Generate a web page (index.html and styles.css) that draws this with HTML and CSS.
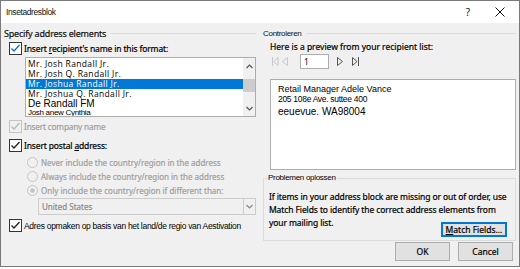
FILE: index.html
```html
<!DOCTYPE html>
<html lang="nl">
<head>
  <meta charset="UTF-8" />
  <title>Insetadresblok</title>
  <link rel="stylesheet" href="styles.css">
</head>
<body>

  <div class="dialog">
    <div class="titlebar">
      <span class="title">Insetadresblok</span>
      <span class="help">?</span>
      <svg class="close" width="10" height="10" viewBox="0 0 10 10"><path d="M0.5 0.5 L9.5 9.5 M9.5 0.5 L0.5 9.5" stroke="#111" stroke-width="1"/></svg>
    </div>

    <div class="content">
      <!-- linker kolom -->
      <div class="col left">
        <div class="group-head"><span>Specify address elements</span><i></i></div>

        <label class="check-row first">
          <svg class="box" width="13" height="13" viewBox="0 0 13 13"><rect x="0.5" y="0.5" width="12" height="12" fill="#fff" stroke="#333"/><path d="M2.5 6.5 L5 9 L10.5 3" fill="none" stroke="#0a6fd0" stroke-width="1.3"/></svg>
          <span>Insert <u>r</u>ecipient's name in this format:</span>
        </label>

        <div class="listbox">
          <div class="items">
            <div class="item">Mr. Josh Randall Jr.</div>
            <div class="item">Mr. Josh Q. Randall Jr.</div>
            <div class="item selected">Mr. Joshua Randall Jr.</div>
            <div class="item">Mr. Joshua Q. Randall Jr.</div>
            <div class="item big">De Randall FM</div>
            <div class="item small">Josh anew Cynthia</div>
          </div>
          <div class="scrollbar">
            <svg width="11" height="11" viewBox="0 0 11 11"><path d="M2.5 7 L5.5 4 L8.5 7" fill="none" stroke="#555" stroke-width="1.2"/></svg>
            <div class="thumb"></div>
            <svg class="down" width="11" height="11" viewBox="0 0 11 11"><path d="M2.5 4 L5.5 7 L8.5 4" fill="none" stroke="#555" stroke-width="1.2"/></svg>
          </div>
        </div>

        <label class="check-row disabled">
          <svg class="box" width="13" height="13" viewBox="0 0 13 13"><rect x="0.5" y="0.5" width="12" height="12" fill="#f0f0f0" stroke="#c4c4c4"/><path d="M2.5 6.5 L5 9 L10.5 3" fill="none" stroke="#b8b8b8" stroke-width="1.3"/></svg>
          <span>Insert company name</span>
        </label>

        <label class="check-row postal">
          <svg class="box" width="13" height="13" viewBox="0 0 13 13"><rect x="0.5" y="0.5" width="12" height="12" fill="#fff" stroke="#333"/><path d="M2.5 6.5 L5 9 L10.5 3" fill="none" stroke="#222" stroke-width="1.3"/></svg>
          <span>Insert postal <u>a</u>ddress:</span>
        </label>

        <div class="radios">
          <div class="radio-row">
            <svg width="11" height="11" viewBox="0 0 11 11"><circle cx="5.5" cy="5.5" r="5" fill="#f0f0f0" stroke="#c4c4c4"/></svg>
            <span>Never include the country/region in the address</span>
          </div>
          <div class="radio-row">
            <svg width="11" height="11" viewBox="0 0 11 11"><circle cx="5.5" cy="5.5" r="5" fill="#f0f0f0" stroke="#c4c4c4"/></svg>
            <span>Always include the country/region in the address</span>
          </div>
          <div class="radio-row">
            <svg width="11" height="11" viewBox="0 0 11 11"><circle cx="5.5" cy="5.5" r="5" fill="#f0f0f0" stroke="#c4c4c4"/><circle cx="5.5" cy="5.5" r="2.3" fill="#c4c4c4"/></svg>
            <span>Only include the country/region if different than:</span>
          </div>
        </div>

        <div class="select">
          <span>United States</span>
          <div class="select-btn">
            <svg width="9" height="9" viewBox="0 0 9 9"><path d="M1.5 3 L4.5 6 L7.5 3" fill="none" stroke="#888" stroke-width="1.2"/></svg>
          </div>
        </div>

        <label class="check-row adres">
          <svg class="box" width="13" height="13" viewBox="0 0 13 13"><rect x="0.5" y="0.5" width="12" height="12" fill="#fff" stroke="#333"/><path d="M2.5 6.5 L5 9 L10.5 3" fill="none" stroke="#222" stroke-width="1.3"/></svg>
          <span>Adres opmaken op basis van het land/de regio van Aestivation</span>
        </label>
      </div>

      <!-- rechter kolom -->
      <div class="col right">
        <div class="group-head small-head"><span>Controleren</span><i></i></div>
        <div class="preview-label">Here is a preview from your recipient list:</div>

        <div class="nav">
          <svg width="8" height="11" viewBox="0 0 8 11"><path d="M1.5 1 V10 M7 1.5 L2.5 5.5 L7 9.5 Z" fill="none" stroke="#c8c8c8"/></svg>
          <svg width="8" height="11" viewBox="0 0 8 11"><path d="M6.5 1.5 L1.5 5.5 L6.5 9.5 Z" fill="none" stroke="#c8c8c8"/></svg>
          <div class="num">1</div>
          <svg width="8" height="11" viewBox="0 0 8 11"><path d="M1.5 1.5 L6.5 5.5 L1.5 9.5 Z" fill="none" stroke="#555"/></svg>
          <svg class="last" width="9" height="11" viewBox="0 0 9 11"><path d="M1.5 1.5 L6 5.5 L1.5 9.5 Z M7.5 1 V10" fill="none" stroke="#555"/></svg>
        </div>

        <div class="preview">
          <div class="p1">Retail Manager Adele Vance</div>
          <div class="p2">205 108e Ave. suttee 400</div>
          <div class="p3">eeuevue. WA98004</div>
        </div>

        <div class="fixbox">
          <span class="fix-title">Problemen oplossen</span>
          <p>If items in your address block are missing or out of order, use<br>Match Fields to identify the correct address elements from</p>
          <div class="fix-last">
            <span>your mailing list.</span>
            <button class="btn match"><u>M</u>atch Fields...</button>
          </div>
        </div>

        <div class="footer">
          <button class="btn">OK</button>
          <button class="btn">Cancel</button>
        </div>
      </div>
    </div>
  </div>

</body>
</html>
```

FILE: styles.css
```css
body {
  margin: 0;
  background: #fff;
  font-family: 'Noto Sans', 'Open Sans', sans-serif;
  font-size: 8.5px;
  color: #111;
}

.dialog {
  width: 520px;
  height: 267px;
  box-sizing: border-box;
  border: 1px solid #7a7a7a;
  background: #f0f0f0;
  display: flex;
  flex-direction: column;
}

.titlebar {
  height: 22px;
  background: #fff;
  display: flex;
  align-items: center;
  padding: 0 14px 0 5px;
}

.title {
  font-family: 'Liberation Sans', sans-serif;
  font-size: 8.5px;
  letter-spacing: -0.4px;
  flex: 1;
}

.help {
  font-size: 10px;
  margin-right: 25px;
}

.content {
  flex: 1;
  display: flex;
}

.col {
  display: flex;
  flex-direction: column;
}

.left {
  width: 252px;
  padding: 4px 0 0 3px;
}

.right {
  width: 253px;
  padding: 4px 0 0 7px;
}

.group-head {
  display: flex;
  align-items: center;
  height: 12px;
  font-size: 9px;
  letter-spacing: -0.2px;
  -webkit-text-stroke: 0.2px #111;
}

.group-head i {
  flex: 1;
  height: 1px;
  background: #dcdcdc;
  margin-left: 4px;
}

.small-head {
  font-family: 'Liberation Sans', sans-serif;
  font-size: 8px;
  letter-spacing: -0.3px;
  -webkit-text-stroke: 0;
}

.check-row {
  display: flex;
  align-items: center;
  gap: 2px;
  height: 13px;
  margin-left: 5px;
  color: #000;
  letter-spacing: -0.15px;
  -webkit-text-stroke: 0.2px #000;
}

.check-row.first {
  margin-top: 3px;
}

.check-row.disabled {
  color: #a0a0a0;
  -webkit-text-stroke: 0.2px #a0a0a0;
  font-size: 8.2px;
  margin-top: 3px;
}

.check-row.postal {
  margin-top: 6px;
}

.check-row.adres {
  margin-top: 4px;
  font-family: 'Liberation Sans', sans-serif;
  font-size: 8.5px;
  letter-spacing: -0.3px;
  -webkit-text-stroke: 0;
}

.listbox {
  margin: 2px 0 0 21px;
  height: 60px;
  border: 1px solid #adadad;
  background: #fff;
  display: flex;
  overflow: hidden;
  box-sizing: border-box;
}

.items {
  flex: 1;
  padding-top: 1px;
  font-family: 'Open Sans', 'Noto Sans', sans-serif;
  font-size: 8.5px;
  letter-spacing: 0.35px;
}

.item {
  height: 10px;
  line-height: 10px;
  padding-left: 2px;
  color: #000;
  white-space: nowrap;
}

.item.selected {
  background: #0078d7;
  color: #fff;
}

.item.big {
  font-family: 'Liberation Sans', sans-serif;
  font-size: 10px;
  letter-spacing: 0;
  height: 9px;
  line-height: 10px;
}

.item.small {
  font-family: 'Liberation Sans', sans-serif;
  font-size: 8px;
  letter-spacing: -0.3px;
  height: 8px;
  line-height: 9px;
}

.scrollbar {
  width: 12px;
  background: #f0f0f0;
  display: flex;
  flex-direction: column;
  align-items: center;
}

.scrollbar svg {
  margin-top: 3px;
}

.scrollbar .thumb {
  width: 12px;
  height: 13px;
  background: #cdcdcd;
  margin-top: 7px;
}

.scrollbar .down {
  margin-top: auto;
  margin-bottom: 2px;
}

.radios {
  margin: 3px 0 0 23px;
  color: #a0a0a0;
  font-size: 8px;
  -webkit-text-stroke: 0.2px #a0a0a0;
}

.radio-row {
  display: flex;
  align-items: center;
  gap: 3px;
  height: 14px;
}

.select {
  margin: 1px 0 0 34px;
  height: 17px;
  box-sizing: border-box;
  border: 1px solid #cccccc;
  background: #f0f0f0;
  display: flex;
  align-items: center;
  color: #8a8a8a;
  font-size: 8px;
  -webkit-text-stroke: 0.2px #8a8a8a;
  padding-left: 3px;
}

.select span {
  flex: 1;
}

.select-btn {
  width: 11px;
  height: 15px;
  border-left: 1px solid #cccccc;
  display: flex;
  align-items: center;
  justify-content: center;
}

.preview-label {
  margin: 2px 0 0 7px;
  height: 12px;
  line-height: 12px;
  color: #000;
  -webkit-text-stroke: 0.2px #000;
}

.nav {
  display: flex;
  align-items: center;
  gap: 2px;
  margin: 1px 0 0 8px;
  height: 15px;
}

.nav .num {
  width: 29px;
  height: 15px;
  box-sizing: border-box;
  border: 1px solid #adadad;
  background: #fff;
  line-height: 13px;
  padding-left: 3px;
  margin: 0 5px 0 9px;
}

.nav .last {
  margin-left: 5px;
}

.preview {
  margin: 10px 0 0 7px;
  height: 91px;
  box-sizing: border-box;
  border: 1px solid #adadad;
  background: #fff;
  padding: 4px 0 0 7px;
  font-family: 'Liberation Sans', sans-serif;
  color: #000;
}

.p1 {
  font-size: 9px;
  height: 10px;
}

.p2 {
  font-size: 8.5px;
  letter-spacing: -0.3px;
  height: 12px;
}

.p3 {
  font-size: 10px;
}

.fixbox {
  margin-top: 8px;
  height: 63px;
  box-sizing: border-box;
  border: 1px solid #dcdcdc;
  position: relative;
  padding: 11px 8px 0 5px;
  font-size: 8.5px;
  letter-spacing: -0.1px;
  color: #000;
}

.fix-title {
  position: absolute;
  left: 4px;
  top: -6px;
  background: #f0f0f0;
  font-family: 'Liberation Sans', sans-serif;
  font-size: 8px;
  letter-spacing: -0.3px;
  padding-right: 1px;
}

.fixbox p {
  margin: 0;
  line-height: 13px;
  white-space: nowrap;
  -webkit-text-stroke: 0.2px #000;
}

.fix-last {
  display: flex;
  justify-content: space-between;
  align-items: flex-start;
  line-height: 13px;
}

.fix-last span {
  -webkit-text-stroke: 0.2px #000;
}

.fix-last .btn {
  margin-top: 6px;
}

.btn {
  font-family: 'Noto Sans', sans-serif;
  font-size: 8.5px;
  color: #000;
  -webkit-text-stroke: 0.2px #000;
  background: #e1e1e1;
  border: 1px solid #adadad;
  height: 19px;
  width: 55px;
  padding: 0;
}

.btn.match {
  width: 66px;
  height: 15px;
  line-height: 11px;
  border: 1px solid #0078d7;
  box-shadow: inset 0 0 0 1px #0078d7;
}

.footer {
  display: flex;
  justify-content: flex-end;
  gap: 8px;
  padding-right: 3px;
  margin-top: 1px;
}
```
